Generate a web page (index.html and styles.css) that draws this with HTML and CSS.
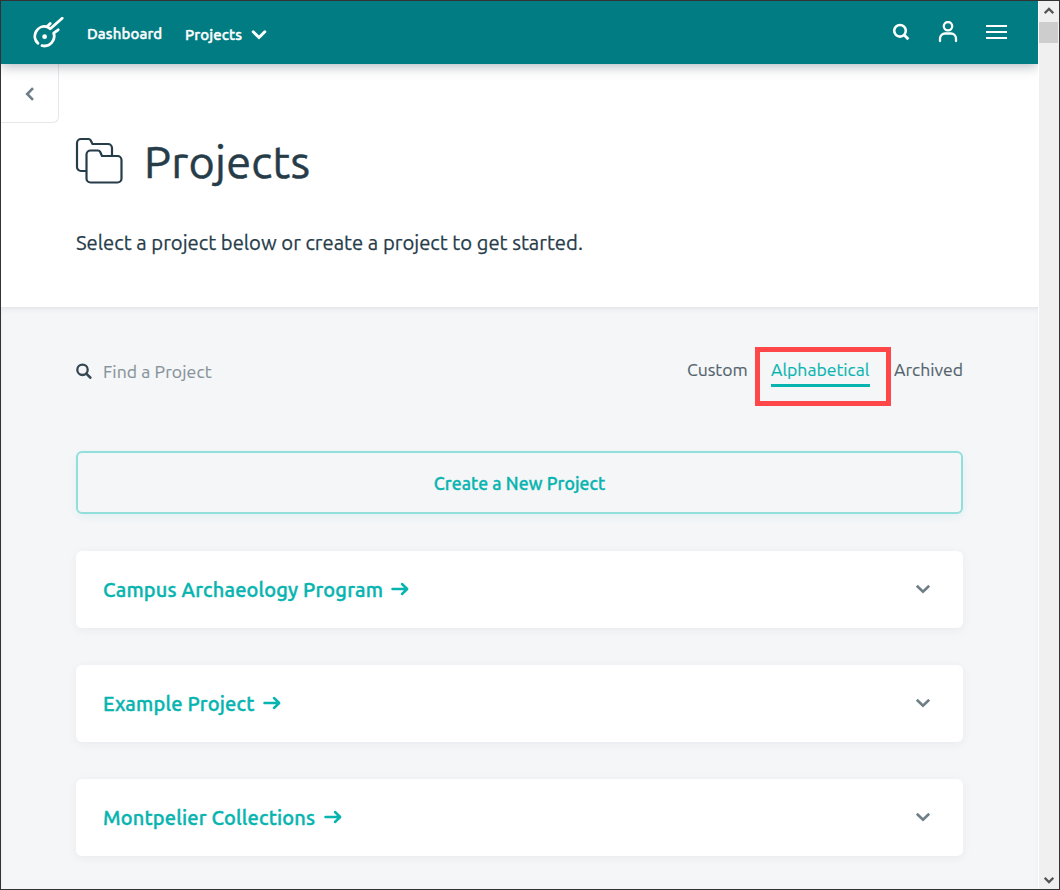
FILE: index.html
```html
<!DOCTYPE html>
<html lang="en">
<head>
<meta charset="utf-8">
<title>Projects</title>
<link rel="stylesheet" href="styles.css">
</head>
<body>
<div class="window">
  <div class="page">
    <header class="topbar">
      <svg class="logo" width="33" height="31" viewBox="0 0 33 31">
        <path d="M6.900 26.300A9.700 9.700 0 0 1 16.200 9.900L19.300 11.800 31.200 1.200M16.200 9.600 19.200 6.600M27.200 12.800 22.700 16.200A9.700 9.700 0 0 1 11 28.600"/>
        <circle cx="13.600" cy="19.700" r="2.400"/>
      </svg>
      <a class="nav dashboard">Dashboard</a>
      <a class="nav projects">Projects</a>
      <svg class="nav-chevron" width="16" height="10" viewBox="0 0 16 10"><path d="M2.200 1.800 8 7.500 13.800 1.800"/></svg>
      <div class="tools">
        <svg width="18" height="18" viewBox="0 0 18 18"><circle cx="8" cy="7.800" r="5.800" stroke-width="2.600"/><path d="m12.200 12 4.200 4.200" stroke-width="3"/></svg>
        <svg class="user" width="20" height="22" viewBox="0 0 20 22"><circle cx="10" cy="5.200" r="4.200"/><path d="M2 20V17.500a5 5 0 0 1 5-5h6a5 5 0 0 1 5 5V20"/></svg>
        <svg width="21" height="16" viewBox="0 0 21 16"><path d="M0 2h21M0 8h21M0 14h21"/></svg>
      </div>
    </header>
    <section class="hero">
      <div class="back"><svg width="10" height="14" viewBox="0 0 10 14"><path d="M8 1.200 2.200 7 8 12.800"/></svg></div>
      <div class="heading">
        <svg width="48" height="46" viewBox="0 0 48 46"><path d="M9.500 33H5a4 4 0 0 1-4-4V5a4 4 0 0 1 4-4h7.500c1 0 1.700.5 2.100 1.300L16.500 6H32a4 4 0 0 1 4 4v7.500"/><path d="M14.500 12.500H22c1 0 1.700.5 2.100 1.300L26 18h15.500a4 4 0 0 1 4 4v18.500a4 4 0 0 1-4 4h-27a4 4 0 0 1-4-4v-24a4 4 0 0 1 4-4Z"/></svg>
        <h1>Projects</h1>
      </div>
      <p>Select a project below or create a project to get started.</p>
    </section>
    <main>
      <div class="filters">
        <svg width="16" height="16" viewBox="0 0 16 16"><circle cx="6.500" cy="6.800" r="5.200" stroke-width="2.300"/><path d="m10.300 10.600 4 4" stroke-width="2.700"/></svg>
        <span class="find">Find a Project</span>
        <div class="tabs">
          <span class="tab custom">Custom</span>
          <span class="tab active">Alphabetical<i class="highlight"></i></span>
          <span class="tab archived">Archived</span>
        </div>
      </div>
      <div class="create"><span>Create a New Project</span></div>
      <div class="card">
        <span class="name campus">Campus Archaeology Program</span>
        <svg class="arrow" width="18" height="14" viewBox="0 0 18 14"><path d="M1.500 7H16M11 2l5.200 5-5.200 5"/></svg>
        <svg class="expand" width="16" height="10" viewBox="0 0 16 10"><path d="M1.800 1.700 8 7.600 14.200 1.700"/></svg>
      </div>
      <div class="card">
        <span class="name example">Example Project</span>
        <svg class="arrow" width="18" height="14" viewBox="0 0 18 14"><path d="M1.500 7H16M11 2l5.200 5-5.200 5"/></svg>
        <svg class="expand" width="16" height="10" viewBox="0 0 16 10"><path d="M1.800 1.700 8 7.600 14.200 1.700"/></svg>
      </div>
      <div class="card">
        <span class="name montpelier">Montpelier Collections</span>
        <svg class="arrow" width="18" height="14" viewBox="0 0 18 14"><path d="M1.500 7H16M11 2l5.200 5-5.200 5"/></svg>
        <svg class="expand" width="16" height="10" viewBox="0 0 16 10"><path d="M1.800 1.700 8 7.600 14.200 1.700"/></svg>
      </div>
    </main>
  </div>
  <aside class="scrollbar">
    <svg width="10" height="8" viewBox="0 0 10 8"><path d="M.7 6.200 5 1.900l4.300 4.300"/></svg>
    <div class="thumb"></div>
    <svg class="down" width="10" height="8" viewBox="0 0 10 8"><path d="M.7 1.800 5 6.100l4.300-4.300"/></svg>
  </aside>
</div>
</body>
</html>
```

FILE: styles.css
```css
* { box-sizing: border-box; }
body { margin: 0; font-family: Ubuntu, "Noto Sans", sans-serif; color: #263c49; -webkit-text-stroke: .15px currentColor; }
svg { display: block; flex: none; fill: none; stroke: currentColor; stroke-width: 2; stroke-linecap: round; }
.window { display: flex; width: 1060px; height: 890px; border: 1px solid #333; overflow: hidden; }
.page { width: 1037px; display: flex; flex-direction: column; overflow: hidden; }
.topbar { height: 63px; flex: none; display: flex; align-items: center; padding: 0 31px 0 30px; background: #007c82; color: #fff; box-shadow: 0 2px 12px rgba(30, 45, 65, .35); position: relative; z-index: 1; }
.logo { stroke-width: 2.8; stroke-linejoin: round; }
.logo circle { fill: currentColor; stroke: none; }
.nav { font-size: 15px; font-weight: 500; line-height: 20px; letter-spacing: .1px; white-space: nowrap; -webkit-text-stroke-width: .4px; }
.dashboard { width: 76px; margin-left: 23px; margin-top: 2px; }
.projects { width: 58px; margin-left: 22px; margin-top: 4px; }
.nav-chevron { margin: 4px 0 0 8px; stroke-width: 3; }
.tools { margin-left: auto; margin-top: -2px; display: flex; align-items: center; gap: 28px; }
.tools svg { stroke-linecap: butt; }
.tools .user { stroke-linecap: round; stroke-width: 2.300; }
.hero { height: 243px; flex: none; background: #fff; box-shadow: 0 2px 10px rgba(30, 45, 65, .1); }
.back { width: 58px; height: 59px; padding-top: 2px; display: grid; place-items: center; border: 1px solid #e5e7e9; border-left: 0; border-top: 0; border-radius: 0 0 6px 0; color: #6e7e88; }
.back svg { stroke-width: 2.600; stroke-linecap: butt; }
.heading { height: 76px; display: flex; align-items: center; padding-left: 75px; }
.heading svg { stroke-linejoin: round; stroke-width: 2.200; overflow: visible; }
h1 { margin: 2px 0 0 20px; font-size: 45px; font-weight: 400; line-height: 60px; letter-spacing: .25px; -webkit-text-stroke-width: .5px; }
.hero p { margin: 29px 0 0 75px; font-size: 20.250px; line-height: 30px; white-space: nowrap; -webkit-text-stroke-width: .25px; }
main { flex: 1; background: #f5f6f8; padding: 40px 75px 0; box-shadow: inset 0 4px 7px -4px rgba(30, 45, 65, .15); }
.filters { height: 48px; display: flex; align-items: center; color: #354750; font-size: 17.600px; }
.find { width: 130px; margin-left: 11px; letter-spacing: .08px; color: #87939a; white-space: nowrap; }
.tabs { margin-left: auto; display: flex; gap: 24px; color: #53636d; }
.tab { height: 34px; line-height: 32px; white-space: nowrap; }
.custom { width: 60px; }
.active { width: 99px; height: 33px; border-bottom: 3px solid #08b4b0; color: #08b4b0; position: relative; }
.archived { width: 69px; }
.highlight { position: absolute; left: -16px; top: -7px; width: 136px; height: 59px; border: 5px solid #ff4648; }
.create { height: 63px; margin-top: 56px; padding-top: 1px; display: grid; place-items: center; border: 2px solid #91deda; border-radius: 6px; color: #08b4b0; font-size: 17.600px; font-weight: 500; letter-spacing: .08px; -webkit-text-stroke-width: .35px; box-shadow: 0 3px 8px rgba(8, 180, 176, .08); }
.card { height: 77px; margin-top: 37px; display: flex; align-items: center; padding: 0 32px 0 27px; border-radius: 6px; background: #fff; color: #08b4b0; box-shadow: 0 2px 10px rgba(30, 45, 65, .06); }
.name { font-size: 20px; font-weight: 500; line-height: 30px; letter-spacing: .16px; white-space: nowrap; -webkit-text-stroke-width: .4px; }
.campus { width: 280px; }
.example { width: 152px; }
.montpelier { width: 213px; }
.arrow { margin-left: 8px; margin-top: -1px; stroke-width: 2.500; stroke-linejoin: round; }
.expand { margin-left: auto; margin-top: -1px; stroke-width: 2.600; color: #6e7e88; stroke-linecap: butt; }
.scrollbar { width: 21px; display: flex; flex-direction: column; align-items: center; padding: 6px 1px 5px 0; border-left: 1px solid #fff; background: #f0f0f0; color: #555; }
.scrollbar svg { stroke-linecap: butt; stroke-width: 2.200; }
.thumb { width: 19px; height: 21px; margin-top: 7px; background: #cdcdcd; }
.down { margin-top: auto; }
```
